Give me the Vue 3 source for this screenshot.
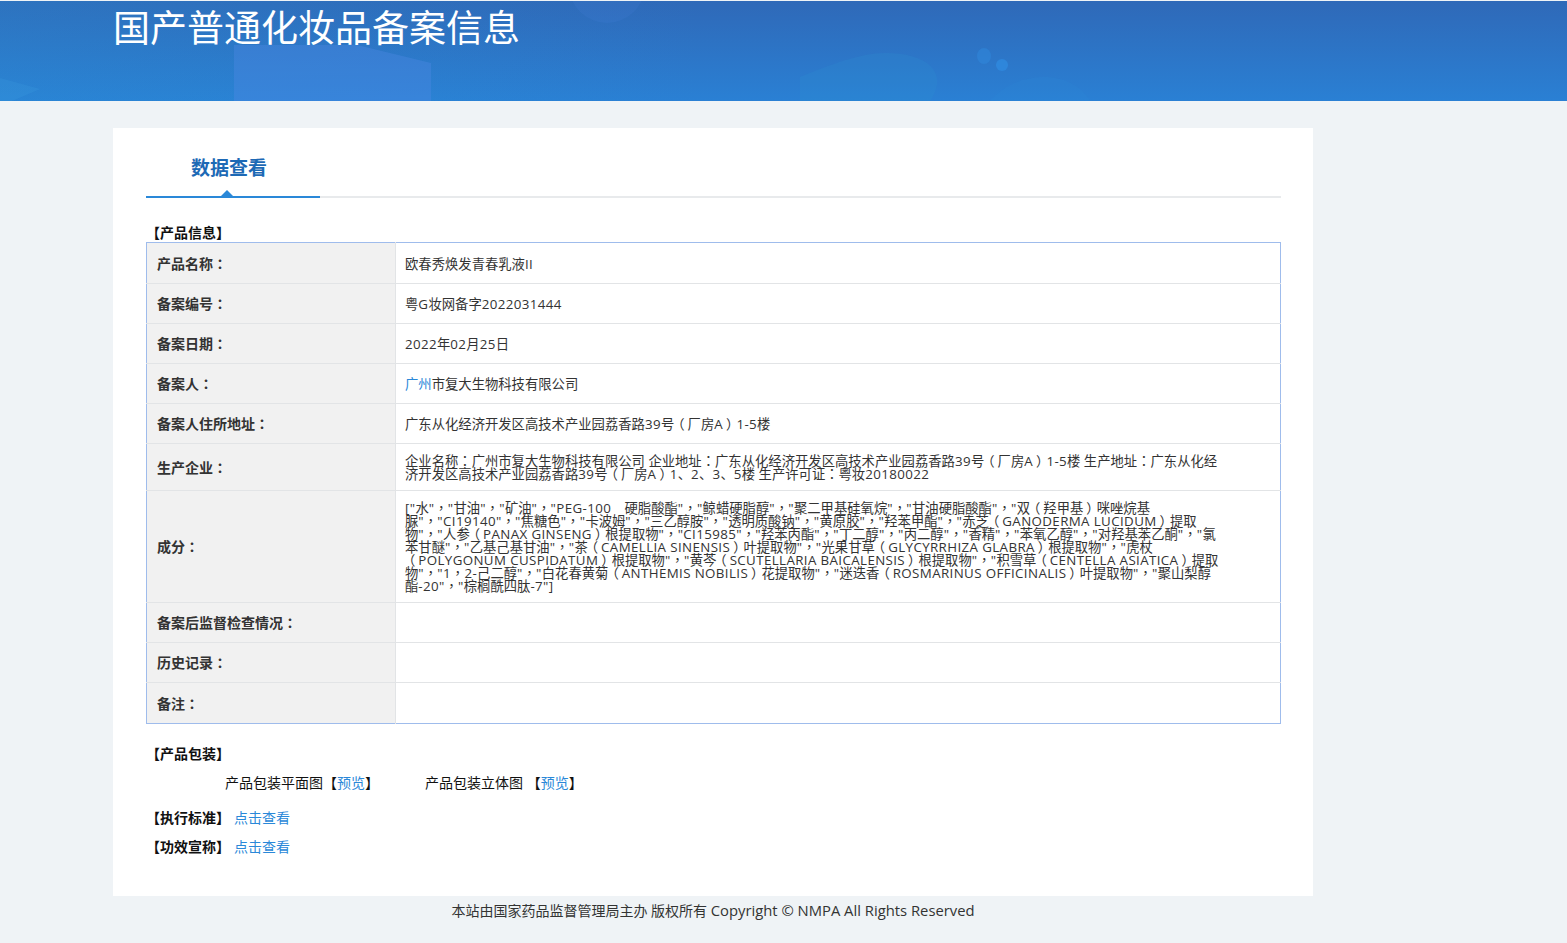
<script setup>
const ingredients = [
  '["水"，"甘油"，"矿油"，"PEG-100　硬脂酸酯"，"鲸蜡硬脂醇"，"聚二甲基硅氧烷"，"甘油硬脂酸酯"，"双（羟甲基）咪唑烷基',
  '脲"，"CI19140"，"焦糖色"，"卡波姆"，"三乙醇胺"，"透明质酸钠"，"黄原胶"，"羟苯甲酯"，"赤芝（GANODERMA LUCIDUM）提取',
  '物"，"人参（PANAX GINSENG）根提取物"，"CI15985"，"羟苯丙酯"，"丁二醇"，"丙二醇"，"香精"，"苯氧乙醇"，"对羟基苯乙酮"，"氯',
  '苯甘醚"，"乙基己基甘油"，"茶（CAMELLIA SINENSIS）叶提取物"，"光果甘草（GLYCYRRHIZA GLABRA）根提取物"，"虎杖',
  '（POLYGONUM CUSPIDATUM）根提取物"，"黄芩（SCUTELLARIA BAICALENSIS）根提取物"，"积雪草（CENTELLA ASIATICA）提取',
  '物"，"1，2-己二醇"，"白花春黄菊（ANTHEMIS NOBILIS）花提取物"，"迷迭香（ROSMARINUS OFFICINALIS）叶提取物"，"聚山梨醇',
  '酯-20"，"棕榈酰四肽-7"]'
]
const rows = [
  { label: '产品名称：', lines: ['欧春秀焕发青春乳液II'] },
  { label: '备案编号：', lines: ['粤G妆网备字2022031444'] },
  { label: '备案日期：', lines: ['2022年02月25日'] },
  { label: '备案人：', link: '广州', lines: ['市复大生物科技有限公司'] },
  { label: '备案人住所地址：', lines: ['广东从化经济开发区高技术产业园荔香路39号（厂房A）1-5楼'] },
  { label: '生产企业：', lines: [
    '企业名称：广州市复大生物科技有限公司 企业地址：广东从化经济开发区高技术产业园荔香路39号（厂房A）1-5楼 生产地址：广东从化经',
    '济开发区高技术产业园荔香路39号（厂房A）1、2、3、5楼 生产许可证：粤妆20180022'
  ] },
  { label: '成分：', lines: ingredients },
  { label: '备案后监督检查情况：', lines: [] },
  { label: '历史记录：', lines: [] },
  { label: '备注：', lines: [] }
]
const classOf = (p) => {
  if (p === '（') return 'punct open'
  if (p === '）') return 'punct close'
  if (p === '，' || p === '：') return 'punct'
  if (/^[\x21-\x7e]/.test(p) || /^ [\x21-\x7e]/.test(p)) return 'run'
  return ''
}
const parts = (s) => s.split(/([，：（）]|[\x20-\x7e]+)/).filter(Boolean).map((text) => ({ text, cls: classOf(text) }))
</script>

<template>
  <div class="page">
    <header class="banner">
      <svg class="banner-art" viewBox="0 0 1567 100" preserveAspectRatio="none" aria-hidden="true">
        <path d="M234 100V44L357 44L431 62V100Z" fill="#4f8ae6" fill-opacity="0.38" />
        <path d="M0 77L40 88L12 100H0Z" fill="#3a9ae0" fill-opacity="0.25" />
        <circle cx="607" cy="-16" r="38" fill="#4f8ae0" fill-opacity="0.14" />
        <path d="M800 76C830 64 860 52 885 52C925 52 950 70 930 100H800Z" fill="#2f90d0" fill-opacity="0.22" />
        <ellipse cx="984" cy="55" rx="7" ry="8" fill="#2f8ade" fill-opacity="0.5" />
        <ellipse cx="1002" cy="64" rx="6" ry="6" fill="#2f8ade" fill-opacity="0.8" />
        <path d="M990 100C1015 70 1070 66 1090 100Z" fill="#2f90e0" fill-opacity="0.12" />
      </svg>
      <h1 class="banner-title">国产普通化妆品备案信息</h1>
    </header>

    <main class="card">
      <div class="tabs">
        <div class="tab">数据查看</div>
      </div>

      <div class="heading first">【产品信息】</div>
      <table class="info">
        <tbody>
          <tr v-for="row in rows" :key="row.label">
            <th><span v-for="(p, k) in parts(row.label)" :key="k" :class="p.cls">{{ p.text }}</span></th>
            <td>
              <div v-for="(line, i) in row.lines" :key="i" class="line"><span v-if="row.link" class="link">{{ row.link }}</span><span v-for="(p, k) in parts(line)" :key="k" :class="p.cls">{{ p.text }}</span></div>
            </td>
          </tr>
        </tbody>
      </table>

      <div class="heading pack-heading">【产品包装】</div>
      <div class="pack">
        <span class="pack-item">产品包装平面图【<a class="link">预览</a>】</span>
        <span class="pack-item">产品包装立体图 【<a class="link">预览</a>】</span>
      </div>
      <div class="heading-row"><span class="heading">【执行标准】</span><a class="link">点击查看</a></div>
      <div class="heading-row"><span class="heading">【功效宣称】</span><a class="link">点击查看</a></div>
    </main>

    <footer class="foot">本站由国家药品监督管理局主办 版权所有 <span class="latin">Copyright © NMPA All Rights Reserved</span></footer>
  </div>
</template>

<style>
html, body { margin: 0; background: #eff3f6; }
</style>

<style scoped>
.page {
  min-height: 943px;
  background: #eff3f6;
  font-family: "Open Sans", "Noto Sans CJK SC", sans-serif;
  font-size: 14px;
  color: #333;
  overflow: hidden;
}
.banner {
  position: relative;
  height: 100px;
  margin-top: 1px;
  overflow: hidden;
  background:
    linear-gradient(90deg, rgba(40,150,215,0.22) 0%, rgba(40,130,215,0) 45%),
    linear-gradient(180deg, #2f69b8 0%, #2a80d4 100%);
}
.banner-art { position: absolute; inset: 0; width: 100%; height: 100%; }
.banner-title {
  position: relative;
  margin: 0 0 0 113px;
  font-size: 37px;
  font-weight: 400;
  line-height: 54px;
  color: #fff;
}
.card {
  box-sizing: border-box;
  width: 1200px;
  height: 768px;
  margin: 27px 0 0 113px;
  padding: 0 32px 0 33px;
  background: #fff;
}
.tabs {
  height: 68px;
  border-bottom: 2px solid #e8eaec;
}
.tab {
  position: relative;
  box-sizing: content-box;
  width: 129px;
  height: 68px;
  padding-left: 45px;
  border-bottom: 2px solid #2a88d8;
  font-size: 19px;
  font-weight: 700;
  line-height: 80px;
  color: #1d69b5;
}
.tab::after {
  content: "";
  position: absolute;
  left: 75px;
  bottom: 0;
  border: 6px solid transparent;
  border-top: 0;
  border-bottom-color: #2a88d8;
}
.heading { font-weight: 700; color: #111; }
.first { line-height: 20px; margin-top: 25px; height: 19px; }
.info {
  width: 1135px;
  border: 1px solid #9fbcec;
  border-collapse: collapse;
  table-layout: fixed;
}
.info tr { border-bottom: 1px solid #e2e4e6; }
.info tr:last-child { border-bottom: 0; }
.info th, .info td { vertical-align: middle; }
.info th {
  width: 228px;
  padding: 10px;
  text-align: left;
  background: #f1f1f1;
  font-weight: 700;
  line-height: 19px;
  height: 19px;
  border-right: 1px solid #e2e4e6;
  color: #333;
}
.info td { padding: 11px 10px 9px 9px; font-size: 13.33px; }
.info tr:first-child th { padding-top: 11px; }
.info tr:first-child td { padding-top: 12px; }
.info tr:last-child th { padding-top: 11px; padding-bottom: 10px; }
.punct { font-family: "Noto Sans CJK TC", sans-serif; line-height: 0; }
.open { margin: 0 3px 0 -3px; }
.close { margin: 0 -3px 0 3px; }
.run { letter-spacing: 0.38px; }
.line { line-height: 13px; white-space: nowrap; }
.link { color: #2a88d8; text-decoration: none; }
.pack-heading { margin-top: 20px; line-height: 20px; }
.pack { display: flex; gap: 46px; padding-left: 79px; margin-top: 9px; line-height: 20px; color: #111; }
.heading-row { display: flex; gap: 4px; line-height: 20px; margin-top: 9px; }
.pack + .heading-row { margin-top: 15px; }
.foot {
  width: 1200px;
  margin-left: 113px;
  margin-top: 4px;
  text-align: center;
  line-height: 20px;
}
.latin { font-size: 14.8px; }
</style>
